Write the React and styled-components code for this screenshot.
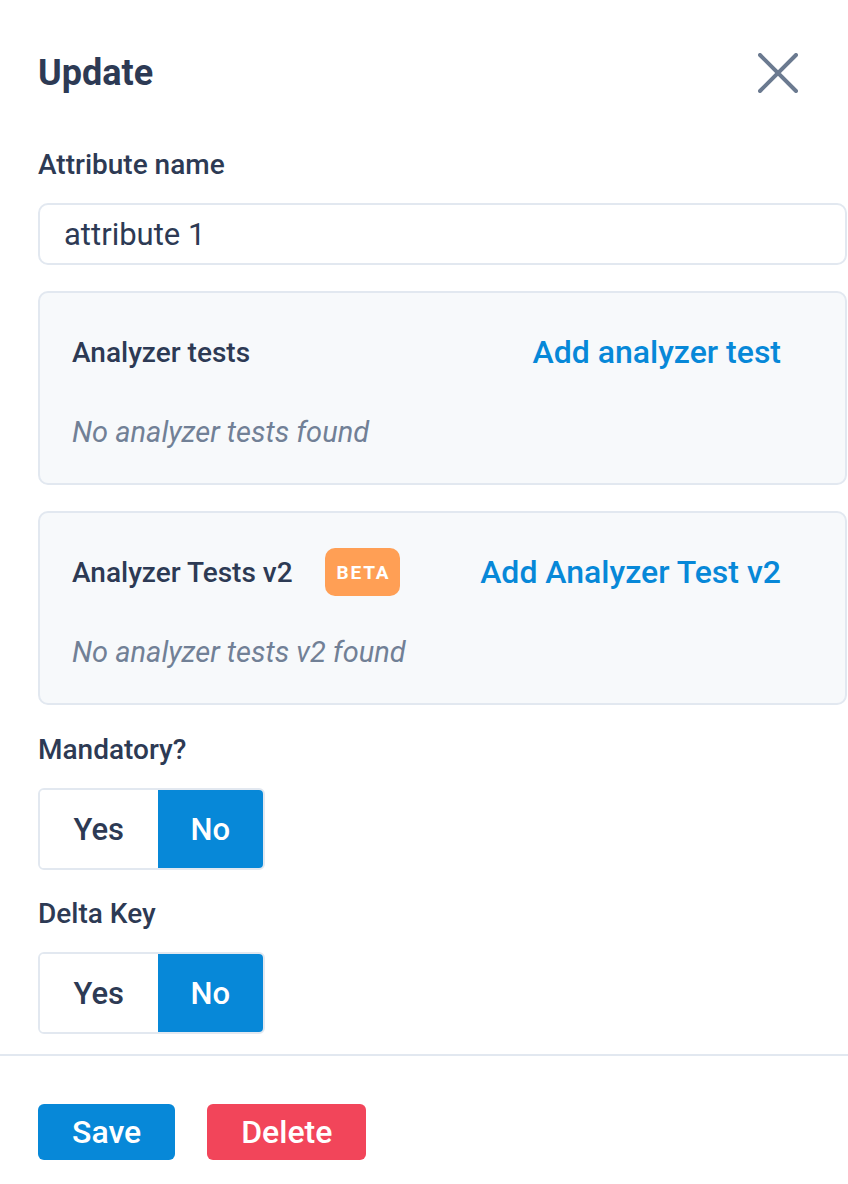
import React from "react";
import styled, { createGlobalStyle } from "styled-components";

const Global = createGlobalStyle`
  html, body { margin: 0; padding: 0; background: #ffffff; }
  body { font-family: Roboto, "Liberation Sans", Arial, sans-serif; color: #2d3a54; }
  * { box-sizing: border-box; }
`;

const Panel = styled.div`
  width: 848px;
  min-height: 1184px;
  background: #ffffff;
  display: flex;
  flex-direction: column;
  overflow: hidden;
`;

const Body = styled.div`
  padding: 49px 1px 20px 38px;
  display: flex;
  flex-direction: column;
`;

const Header = styled.div`
  height: 48px;
  display: flex;
  align-items: center;
  justify-content: space-between;
  margin-bottom: 48px;
`;

const Title = styled.h2`
  margin: 0;
  font-size: 36px;
  line-height: 48px;
  font-weight: 700;
  color: #2d3a54;
`;

const CloseButton = styled.button`
  width: 40px;
  height: 40px;
  margin-right: 49px;
  padding: 0;
  border: none;
  background: transparent;
  display: flex;
  align-items: center;
  justify-content: center;
  cursor: pointer;
`;

const Label = styled.div`
  font-size: 28px;
  line-height: 40px;
  font-weight: 500;
  color: #2d3a54;
  margin-top: ${(p) => p.$top || 0}px;
  margin-bottom: ${(p) => p.$bottom || 18}px;
`;

const Input = styled.input`
  width: 100%;
  height: 62px;
  border: 2px solid #e2e8f0;
  border-radius: 10px;
  padding: 0 24px;
  font-family: inherit;
  font-size: 31px;
  color: #2d3a54;
  background: #ffffff;
  outline: none;
`;

const Card = styled.div`
  margin-top: 26px;
  height: 194px;
  border: 2px solid #e2e8f0;
  border-radius: 10px;
  background: #f7f9fb;
  padding: 35px 32px;
  display: flex;
  flex-direction: column;
`;

const CardHeader = styled.div`
  height: 48px;
  display: flex;
  align-items: center;
  justify-content: space-between;
`;

const CardTitleGroup = styled.div`
  display: flex;
  align-items: center;
  gap: 32px;
`;

const CardTitle = styled.span`
  font-size: 28px;
  font-weight: 500;
  color: #2d3a54;
`;

const Badge = styled.span`
  height: 48px;
  padding: 0 10px 0 12px;
  border-radius: 10px;
  background: #ff9f55;
  color: #ffffff;
  font-size: 19px;
  font-weight: 700;
  letter-spacing: 1.8px;
  display: inline-flex;
  align-items: center;
`;

const LinkButton = styled.button`
  border: none;
  background: transparent;
  padding: 0;
  margin-right: 32px;
  font-family: inherit;
  font-size: 32px;
  font-weight: 500;
  color: #0788d8;
  cursor: pointer;
`;

const Empty = styled.div`
  margin-top: 40px;
  font-size: 29px;
  line-height: 32px;
  font-style: italic;
  color: #718096;
`;

const Toggle = styled.div`
  display: inline-flex;
  align-self: flex-start;
  height: 82px;
  border: 2px solid #e2e8f0;
  border-radius: 6px;
  overflow: hidden;
  background: #ffffff;
`;

const ToggleOption = styled.button`
  border: none;
  padding: 0 ${(p) => (p.$active ? 33 : 33.5)}px;
  font-family: inherit;
  font-size: 31px;
  font-weight: 500;
  background: ${(p) => (p.$active ? "#0788d8" : "#ffffff")};
  color: ${(p) => (p.$active ? "#ffffff" : "#2d3a54")};
  cursor: pointer;
`;

const Footer = styled.div`
  border-top: 2px solid #e2e8f0;
  padding: 48px 38px 24px;
  display: flex;
  gap: 32px;
`;

const ActionButton = styled.button`
  height: 56px;
  padding: 0 ${(p) => p.$pad}px;
  border: none;
  border-radius: 6px;
  background: ${(p) => p.$bg};
  color: #ffffff;
  font-family: inherit;
  font-size: 32px;
  font-weight: 500;
  cursor: pointer;
`;

function CloseIcon() {
  return (
    <svg width="40" height="40" viewBox="0 0 40 40" fill="none">
      <path
        d="M2 2 L38 38 M38 2 L2 38"
        stroke="#6b7a90"
        strokeWidth="4"
        strokeLinecap="round"
      />
    </svg>
  );
}

function YesNo() {
  return (
    <Toggle>
      <ToggleOption>Yes</ToggleOption>
      <ToggleOption $active>No</ToggleOption>
    </Toggle>
  );
}

export default function App() {
  return (
    <>
      <Global />
      <Panel>
        <Body>
          <Header>
            <Title>Update</Title>
            <CloseButton aria-label="Close">
              <CloseIcon />
            </CloseButton>
          </Header>

          <Label $bottom={18}>Attribute name</Label>
          <Input defaultValue="attribute 1" />

          <Card>
            <CardHeader>
              <CardTitleGroup>
                <CardTitle>Analyzer tests</CardTitle>
              </CardTitleGroup>
              <LinkButton>Add analyzer test</LinkButton>
            </CardHeader>
            <Empty>No analyzer tests found</Empty>
          </Card>

          <Card>
            <CardHeader>
              <CardTitleGroup>
                <CardTitle>Analyzer Tests v2</CardTitle>
                <Badge>BETA</Badge>
              </CardTitleGroup>
              <LinkButton>Add Analyzer Test v2</LinkButton>
            </CardHeader>
            <Empty>No analyzer tests v2 found</Empty>
          </Card>

          <Label $top={25}>Mandatory?</Label>
          <YesNo />

          <Label $top={24}>Delta Key</Label>
          <YesNo />
        </Body>
        <Footer>
          <ActionButton $bg="#0788d8" $pad={34}>Save</ActionButton>
          <ActionButton $bg="#f2455a" $pad={34}>Delete</ActionButton>
        </Footer>
      </Panel>
    </>
  );
}
